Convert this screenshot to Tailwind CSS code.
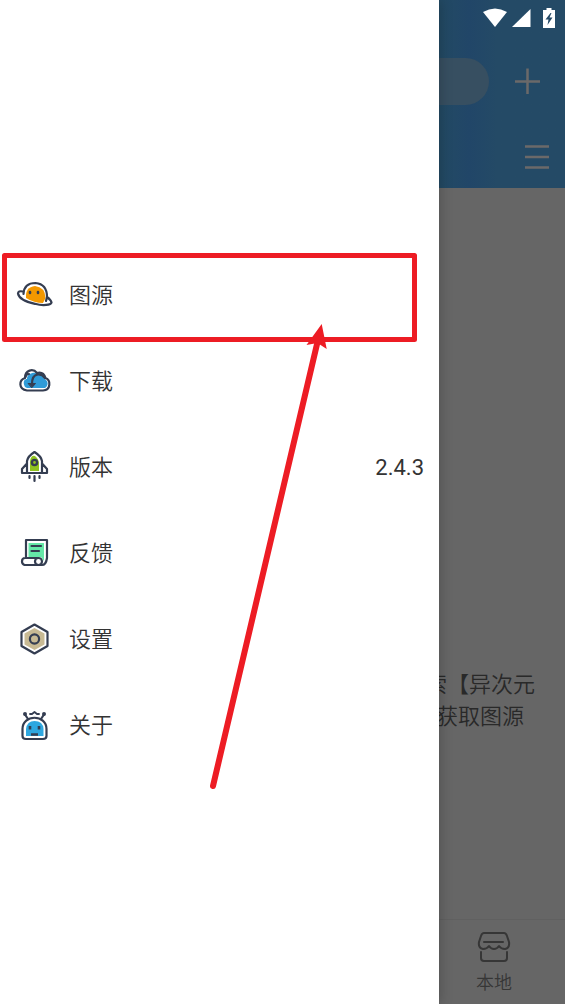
<!DOCTYPE html>
<html lang="zh-CN">
<head>
<meta charset="utf-8">
<meta name="viewport" content="width=device-width, initial-scale=1">
<title>侧边菜单</title>
<script src="https://cdn.jsdelivr.net/npm/@tailwindcss/browser@4"></script>
</head>
<body class="relative min-h-screen overflow-x-hidden bg-[#666666] font-['Roboto','Noto_Sans_CJK_SC',sans-serif] text-[#333333]">

<!-- Dimmed page behind the drawer -->
<div class="flex min-h-screen flex-col">
  <header class="bg-linear-to-r from-[#234a64] from-78% via-[#214668] via-83% to-[#244a66] to-88%">
    <div class="flex h-9 items-center justify-end gap-1 pr-2.5 text-white">
      <svg class="h-5 w-6" viewBox="0 0 24 20" fill="currentColor" aria-label="Wi-Fi"><path d="M0 4Q12-3 24 4L12 19Z"/></svg>
      <svg class="h-5 w-5" viewBox="0 0 20 20" fill="currentColor" aria-label="信号"><path d="M19.500 1V19H1Z"/></svg>
      <svg class="ml-2 h-5 w-3" viewBox="0 0 12 20" aria-label="充电中"><path fill="currentColor" d="M3.500 0H8.500V2H12V20H0V2H3.500Z"/><path fill="#244966" d="M7.500 5L2.500 11.500H5.500L4.500 17L9.500 9.500H6.500L8.500 5Z"/></svg>
    </div>
    <div class="flex h-[90px] items-center pr-6">
      <input type="search" aria-label="搜索" class="ml-4 h-[47px] min-w-0 flex-1 rounded-full bg-[#374f61] px-5 outline-none">
      <button type="button" aria-label="添加" class="ml-6 text-[#6b6969]"><svg class="block size-7" viewBox="0 0 28 28" fill="none" stroke="currentColor" stroke-width="2.500"><path d="M14.500 1.500V27M2 14.500H27"/></svg></button>
    </div>
    <div class="flex h-[62px] items-center justify-end pr-4">
      <button type="button" aria-label="列表" class="text-[#6b6969]"><svg class="block size-7" viewBox="0 0 28 28" fill="none" stroke="currentColor" stroke-width="2.500"><path d="M4 3.500H28M4 14H28M4 24.500H28"/></svg></button>
    </div>
  </header>
  <main class="flex flex-1 flex-col items-end justify-center pr-[30px] pt-[294px]">
    <p class="text-center text-[22px] leading-8 font-[350] text-[#292929]">点击添加或搜索【异次元<br>微信公众号】获取图源</p>
  </main>
  <nav class="flex h-[85px] justify-end border-t border-[#606060]">
    <a href="#local" class="flex w-[142px] flex-col items-center pt-2.5 text-[#363636]">
      <svg class="h-9 w-9" viewBox="0 0 36 36" fill="none" stroke="currentColor" stroke-width="2" stroke-linejoin="round" stroke-linecap="round"><path d="M8 3H28Q30 3 31 6L33 12Q34 18 29 19Q25 19 23 16Q21 19 18 19Q15 19 13 16Q11 19 7 19Q2 18 3 12L5 6Q6 3 8 3ZM8 12H27M5 22V28Q5 31 8 31H28Q31 31 31 28V22"/></svg>
      <span class="mt-[5px] text-lg leading-6 font-[350]">本地</span>
    </a>
  </nav>
</div>

<!-- Drawer -->
<aside class="absolute inset-y-0 left-0 w-[439px] max-w-full bg-white pt-[252px] shadow-[1px_0_12px_rgba(0,0,0,0.22)]">
  <nav class="text-[22px] leading-8">
    <a href="#sources" class="flex h-[86px] items-center gap-3.5 px-[15px]">
      <svg class="size-10" viewBox="0 0 40 40" fill="none" stroke="#343d51" stroke-width="2.200" stroke-linecap="round" stroke-linejoin="round"><path fill="#f39800" stroke="none" d="M11 23Q10 12 20 11Q30 12 30.500 23L28 28Q19 28 11 23Z"/><path d="M8.500 19Q9 8 20.500 8Q32 9 32 22M8 16.500Q3 15.500 3 18.500C4 25 14 27.500 20 28.800C28 31 36 30 36.500 27.500Q36 25 32 22L31 26"/><path stroke-width="2.600" d="M15 17V18M23 17V18"/></svg>
      <span class="pt-0.5 font-[350]">图源</span>
    </a>
    <a href="#downloads" class="flex h-[86px] items-center gap-3.5 px-[15px]">
      <svg class="size-10" viewBox="0 0 40 40" fill="none" stroke="#343d51" stroke-width="2.200" stroke-linecap="round" stroke-linejoin="round"><path fill="#2f9bd8" stroke="none" d="M10 26C7 20 10 18 12 18C12 13 17 11 22 12C29 13 29 15 30 18C34 21 33 25 30 27H12Z"/><path d="M12 29.500H28C36 29 36 19 30.500 17C29 12 26 11 22 12C18 7 10 9 10 17C4 19 3 28 12 29.500ZM10.500 16Q11 13 14 13"/><path d="M30 17C26 12 17 11 17 23"/><path fill="#343d51" stroke-width="1" d="M13.500 22.500H20.500L17 26.500Z"/></svg>
      <span class="pt-0.5 font-[350]">下载</span>
    </a>
    <a href="#version" class="flex h-[86px] items-center gap-3.5 px-[15px]">
      <svg class="size-10" viewBox="0 0 40 40" fill="none" stroke="#343d51" stroke-width="2.200" stroke-linecap="round" stroke-linejoin="round"><path fill="#8fc31f" stroke="none" d="M15 24V14Q16 8 20 9Q24 12 24 17V24Z"/><path d="M12 25V14Q13 9 19.500 5Q26 9 27 14V25M11.500 17L7 22V26H32V22L27.500 17M14.500 29V31M19.500 29V34M24.500 29V31"/><circle cx="19.500" cy="15.500" r="2.600" stroke-width="2.400"/></svg>
      <span class="pt-0.5 font-[350]">版本</span>
      <span class="ml-auto pt-0.5">2.4.3</span>
    </a>
    <a href="#feedback" class="flex h-[86px] items-center gap-3.5 px-[15px]">
      <svg class="size-10" viewBox="0 0 40 40" fill="none" stroke="#343d51" stroke-width="2.200" stroke-linecap="round" stroke-linejoin="round"><path fill="#65e8a8" stroke="none" d="M13.500 10H29V28L26 24H13.500Z"/><path d="M11 24V7H32V25Q31 32 27 32H9.500Q7 31 7 28.500Q7 25 10 25H23M16.500 13H26M16.500 18H24"/><circle cx="23.500" cy="28.500" r="3.500" fill="#fff"/></svg>
      <span class="pt-0.5 font-[350]">反馈</span>
    </a>
    <a href="#settings" class="flex h-[86px] items-center gap-3.5 px-[15px]">
      <svg class="size-10" viewBox="0 0 40 40" fill="none" stroke="#343d51" stroke-width="2.200" stroke-linejoin="round"><path d="M19.500 5.500L32.500 13V27L19.500 34.500L6.500 27V13Z"/><path fill="#c8ba94" stroke="none" d="M19.500 9L29.500 14.500V25.500L19.500 31L9.500 25.500V14.500Z"/><circle cx="19.500" cy="20" r="4.600"/></svg>
      <span class="pt-0.5 font-[350]">设置</span>
    </a>
    <a href="#about" class="flex h-[86px] items-center gap-3.5 px-[15px]">
      <svg class="size-10" viewBox="0 0 40 40" fill="none" stroke="#343d51" stroke-width="2.200" stroke-linecap="round" stroke-linejoin="round"><path fill="#2ea7e0" stroke="none" d="M11 31V24Q12 16 19.500 16Q28 16 28.500 24V31Z"/><path d="M11 34Q7.500 34 7.500 31V24C7.500 9 31.500 9 31.500 24V31Q31.500 34 28 34ZM10 9.500L13 14M29 9.500L26 14"/><path stroke-width="1.800" d="M15 9H17L19.500 7L22 9H24"/><path stroke-width="4" d="M10 9V9M29 9V9"/><path stroke-width="2.600" stroke-linecap="butt" d="M15 21V24.500M24 21V24.500M16 29.500H23"/></svg>
      <span class="pt-0.5 font-[350]">关于</span>
    </a>
  </nav>
</aside>

<!-- Highlight frame and arrow -->
<svg class="pointer-events-none absolute top-0 left-0" width="439" height="800" viewBox="0 0 439 800" fill="none" stroke="#ed1c24" stroke-linejoin="round" stroke-linecap="round" aria-hidden="true">
  <rect x="4.500" y="255.500" width="410" height="84" stroke-width="5"/>
  <path stroke-width="6" d="M213 786L317.500 342"/>
  <path fill="#ed1c24" stroke="none" d="M321.700 324L326.700 349L317.500 343L306.500 345Z"/>
</svg>
</body>
</html>
